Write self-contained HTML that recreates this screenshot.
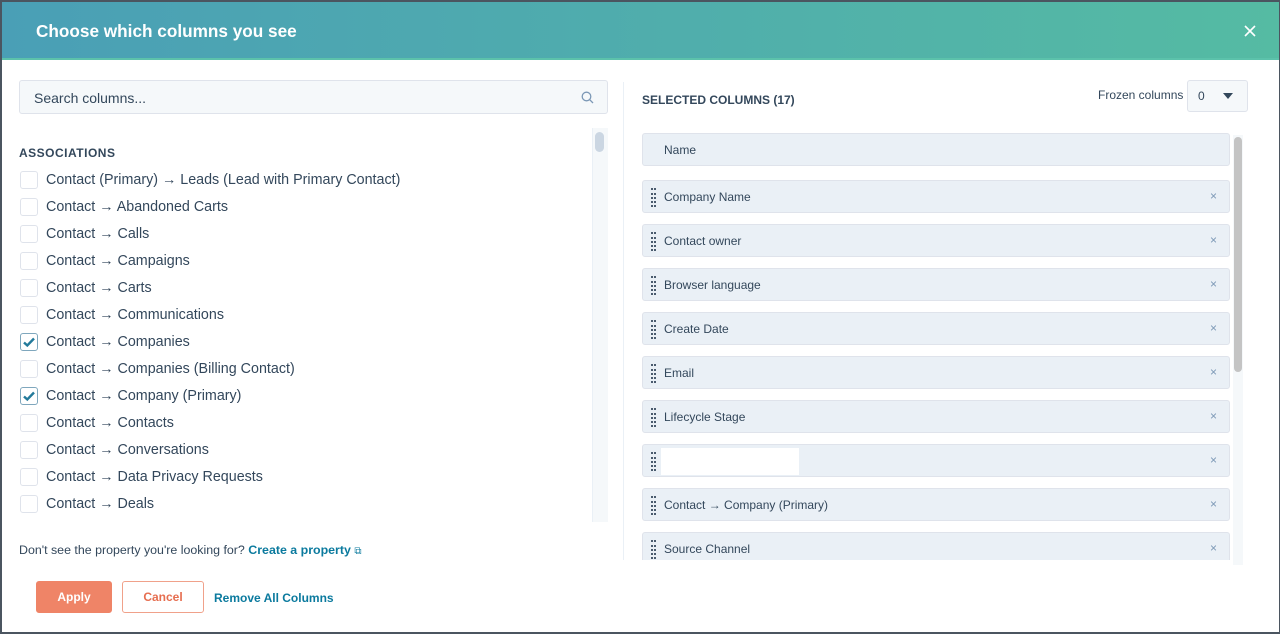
<!DOCTYPE html>
<html><head><style>
*{box-sizing:border-box;margin:0;padding:0}
body{width:1280px;height:634px;background:#4b5560;font-family:"Liberation Sans",sans-serif;color:#33475b;position:relative;overflow:hidden}
.modal{position:absolute;left:2px;top:2px;width:1277px;height:630px;background:#fff;overflow:hidden}
.hdr{position:absolute;left:0;top:0;width:100%;height:58px;background:linear-gradient(90deg,#4a9fb6,#55bba3);border-bottom:2px solid #5cc2ab}
.hdr h1{position:absolute;left:34px;top:19px;font-size:17.2px;font-weight:bold;color:#fff}
.close{position:absolute;left:1242px;top:23px}
.abs{position:absolute}
.search{left:17px;top:78px;width:589px;height:34px;background:#f5f8fa;border:1px solid #dfe3eb;border-radius:3px;font-size:14px;color:#33475b;padding:9px 14px}
.list{left:17px;top:126px;width:589px;height:394px;background:#fff;overflow:hidden}
.sb{left:590px;top:126px;width:16px;height:394px;background:#f5f8fa;border-left:1px solid #eaf0f6}
.sbt{left:593px;top:130px;width:9px;height:20px;background:#cbd6e2;border-radius:5px}
.sec{left:17px;top:144px;font-size:12px;font-weight:bold;letter-spacing:.5px;color:#33475b}
.row{position:absolute;left:18px;height:20px;font-size:14.3px;color:#33475b}
.cb{position:absolute;left:0;top:0;width:18px;height:18px;border:1px solid #dfe3eb;border-radius:3px;background:#fff}
.cb.on{border-color:#7fa7bd;background:#fff}
.row span{position:absolute;left:26px;top:1px;white-space:nowrap}
.foot{left:17px;top:541px;font-size:12.4px;color:#33475b}
.foot b{color:#0b7a9e}
.div{left:621px;top:80px;width:1px;height:480px;background:#eaf0f6}
.selh{left:640px;top:91px;font-size:12px;font-weight:bold;letter-spacing:0}
.frz{left:1096px;top:86px;font-size:12px}
.dd{left:1185px;top:78px;width:61px;height:32px;border:1px solid #dfe3eb;border-radius:3px;background:#f5f8fa;font-size:12px;padding:8px 10px}
.item{position:absolute;left:640px;width:588px;height:33px;background:#eaf0f6;border:1px solid #dfe3eb;border-radius:3px;font-size:12px}
.item span{position:absolute;left:21px;top:9px;white-space:nowrap}
.item i{position:absolute;left:8px;top:7px;width:5px;height:19px;border-left:2px dotted #4a5b6e;border-right:2px dotted #4a5b6e}
.item em{position:absolute;right:12px;top:8px;font-style:normal;font-size:12px;color:#7c98b6}
.rsb{left:1231px;top:133px;width:10px;height:430px;background:#f5f8fa}
.rsbt{left:1232px;top:135px;width:8px;height:235px;background:#c4c4c4;border-radius:4px}
.btn{position:absolute;top:579px;height:32px;border-radius:3px;font-size:12px;font-weight:bold;text-align:center;line-height:30px}
</style></head><body>
<div class="modal">
<div class="hdr"><h1>Choose which columns you see</h1>
<svg class="close" width="12" height="12" viewBox="0 0 12 12"><path d="M1 1L11 11M11 1L1 11" stroke="#fff" stroke-width="1.6"/></svg></div>
<div class="abs search">Search columns...
<svg style="position:absolute;right:13px;top:10px" width="13" height="13" viewBox="0 0 13 13"><circle cx="5.5" cy="5.5" r="4.3" fill="none" stroke="#7c98b6" stroke-width="1.3"/><path d="M8.7 8.7L12 12" stroke="#7c98b6" stroke-width="1.3"/></svg></div>
<div class="abs list"></div>
<div class="abs sb"></div><div class="abs sbt"></div>
<div class="abs sec">ASSOCIATIONS</div>
<div class="row" style="top:169px"><div class="cb"></div><span>Contact (Primary) → Leads (Lead with Primary Contact)</span></div>
<div class="row" style="top:196px"><div class="cb"></div><span>Contact → Abandoned Carts</span></div>
<div class="row" style="top:223px"><div class="cb"></div><span>Contact → Calls</span></div>
<div class="row" style="top:250px"><div class="cb"></div><span>Contact → Campaigns</span></div>
<div class="row" style="top:277px"><div class="cb"></div><span>Contact → Carts</span></div>
<div class="row" style="top:304px"><div class="cb"></div><span>Contact → Communications</span></div>
<div class="row" style="top:331px"><div class="cb on"><svg width="16" height="16" viewBox="0 0 16 16"><path d="M3 8.5L6.3 11.5L13 4.5" fill="none" stroke="#237a9b" stroke-width="2.4"/></svg></div><span>Contact → Companies</span></div>
<div class="row" style="top:358px"><div class="cb"></div><span>Contact → Companies (Billing Contact)</span></div>
<div class="row" style="top:385px"><div class="cb on"><svg width="16" height="16" viewBox="0 0 16 16"><path d="M3 8.5L6.3 11.5L13 4.5" fill="none" stroke="#237a9b" stroke-width="2.4"/></svg></div><span>Contact → Company (Primary)</span></div>
<div class="row" style="top:412px"><div class="cb"></div><span>Contact → Contacts</span></div>
<div class="row" style="top:439px"><div class="cb"></div><span>Contact → Conversations</span></div>
<div class="row" style="top:466px"><div class="cb"></div><span>Contact → Data Privacy Requests</span></div>
<div class="row" style="top:493px"><div class="cb"></div><span>Contact → Deals</span></div>
<div class="abs foot">Don't see the property you're looking for? <b>Create a property</b> <span style="color:#0b7a9e;font-size:10px">⧉</span></div>
<div class="abs div"></div>
<div class="abs selh">SELECTED COLUMNS (17)</div>
<div class="abs frz">Frozen columns</div>
<div class="abs dd">0<svg style="position:absolute;right:14px;top:12px" width="10" height="6"><path d="M0 0H10L5 6Z" fill="#33475b"/></svg></div>
<div class="item" style="top:131px"><span>Name</span></div>
<div class="item" style="top:178px"><i></i><span>Company Name</span><em>×</em></div>
<div class="item" style="top:222px"><i></i><span>Contact owner</span><em>×</em></div>
<div class="item" style="top:266px"><i></i><span>Browser language</span><em>×</em></div>
<div class="item" style="top:310px"><i></i><span>Create Date</span><em>×</em></div>
<div class="item" style="top:354px"><i></i><span>Email</span><em>×</em></div>
<div class="item" style="top:398px"><i></i><span>Lifecycle Stage</span><em>×</em></div>
<div class="item" style="top:442px"><i></i><div style="position:absolute;left:18px;top:3px;width:138px;height:27px;background:#fff"></div><em>×</em></div>
<div class="item" style="top:486px"><i></i><span>Contact → Company (Primary)</span><em>×</em></div>
<div class="item" style="top:530px"><i></i><span>Source Channel</span><em>×</em></div>
<div class="abs" style="left:620px;top:558px;width:657px;height:80px;background:#fff"></div>
<div class="abs rsb"></div><div class="abs rsbt"></div>
<div class="btn" style="left:34px;width:76px;background:#ef8467;color:#fff;border:1px solid #ef8467">Apply</div>
<div class="btn" style="left:120px;width:82px;background:#fff;color:#e66e50;border:1px solid #f0a18a">Cancel</div>
<div class="abs" style="left:212px;top:589px;font-size:12px;font-weight:bold;color:#0b7a9e">Remove All Columns</div>
</div>
</body></html>
